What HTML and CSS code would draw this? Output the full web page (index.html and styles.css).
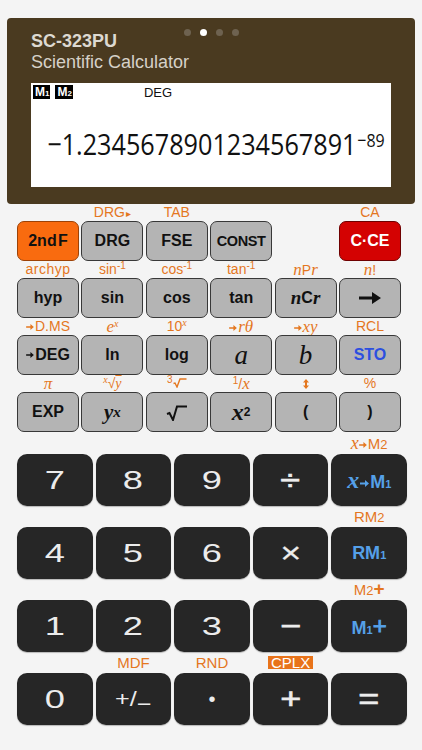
FILE: index.html
```html
<!DOCTYPE html>
<html>
<head>
<meta charset="utf-8">
<link rel="stylesheet" href="styles.css">
</head>
<body>
<div class="panel">
  <div class="head">
    <div class="title">
      <div class="model">SC-323PU</div>
      <div class="sub">Scientific Calculator</div>
    </div>
    <div class="dots"><i></i><i class="on"></i><i></i><i></i></div>
  </div>
  <div class="lcd">
    <div class="lcd-top">
      <span class="mem">M<small>1</small></span><span class="mem">M<small>2</small></span>
      <span class="deg">DEG</span>
    </div>
    <div class="num-line"><span class="num">−1.2345678901234567891<span class="exp">−89</span></span></div>
  </div>
</div>

<div class="fn">
  <!-- row 1 -->
  <div class="cell"><div class="lbl"></div><div class="fk orange">2nd&#8202;F</div></div>
  <div class="cell"><div class="lbl">DRG<span class="tri">▸</span></div><div class="fk">DRG</div></div>
  <div class="cell"><div class="lbl">TAB</div><div class="fk">FSE</div></div>
  <div class="cell"><div class="lbl"></div><div class="fk const">CONST</div></div>
  <div class="cell"></div>
  <div class="cell"><div class="lbl">CA</div><div class="fk red">C·CE</div></div>
  <!-- row 2 -->
  <div class="cell"><div class="lbl arc">archyp</div><div class="fk">hyp</div></div>
  <div class="cell"><div class="lbl">sin<sup>-1</sup></div><div class="fk">sin</div></div>
  <div class="cell"><div class="lbl">cos<sup>-1</sup></div><div class="fk">cos</div></div>
  <div class="cell"><div class="lbl">tan<sup>-1</sup></div><div class="fk">tan</div></div>
  <div class="cell"><div class="lbl"><span class="i big">n</span>P<span class="i big">r</span></div><div class="fk"><span class="i bi">n</span>C<span class="i bi">r</span></div></div>
  <div class="cell"><div class="lbl"><span class="i big">n</span>!</div><div class="fk"><svg class="bigarr" viewBox="0 0 22 12"><path d="M0 4.4h13V0l9 6-9 6V7.6H0z"/></svg></div></div>
  <!-- row 3 -->
  <div class="cell"><div class="lbl"><svg class="sa" viewBox="0 0 9 7"><path d="M0 2.6h5V0l4 3.5L5 7V4.4H0z"/></svg>D.MS</div><div class="fk"><svg class="sa" viewBox="0 0 9 7"><path d="M0 2.6h5V0l4 3.5L5 7V4.4H0z"/></svg>DEG</div></div>
  <div class="cell"><div class="lbl"><span class="i big">e</span><sup class="i">x</sup></div><div class="fk">ln</div></div>
  <div class="cell"><div class="lbl">10<sup class="i">x</sup></div><div class="fk">log</div></div>
  <div class="cell"><div class="lbl"><svg class="sa" viewBox="0 0 9 7"><path d="M0 2.6h5V0l4 3.5L5 7V4.4H0z"/></svg><span class="i big">rθ</span></div><div class="fk"><span class="i ab">a</span></div></div>
  <div class="cell"><div class="lbl"><svg class="sa" viewBox="0 0 9 7"><path d="M0 2.6h5V0l4 3.5L5 7V4.4H0z"/></svg><span class="i big">xy</span></div><div class="fk"><span class="i ab">b</span></div></div>
  <div class="cell"><div class="lbl">RCL</div><div class="fk blue">STO</div></div>
  <!-- row 4 -->
  <div class="cell"><div class="lbl"><span class="i big">π</span></div><div class="fk">EXP</div></div>
  <div class="cell"><div class="lbl"><sup class="i">x</sup>√<span class="i ol">y</span></div><div class="fk"><span class="i bi yx">y</span><sup class="i bi sx">x</sup></div></div>
  <div class="cell"><div class="lbl"><sup>3</sup><svg class="rad-s" viewBox="0 0 14 10"><path d="M0.5 5.5 2 5 4 9 7 1H13.5"/></svg></div><div class="fk"><svg class="rad" viewBox="0 0 22 16"><path d="M1 9 3.5 8 7 15 11 1.5H21"/></svg></div></div>
  <div class="cell"><div class="lbl"><sup>1</sup>/<span class="i big">x</span></div><div class="fk"><span class="i bi x2">x</span><sup class="s2">2</sup></div></div>
  <div class="cell"><div class="lbl"><svg class="ud" viewBox="0 0 6 10"><path d="M3 0 6 3.5H4v3h2L3 10 0 6.5h2v-3H0z"/></svg></div><div class="fk">(</div></div>
  <div class="cell"><div class="lbl">%</div><div class="fk">)</div></div>
</div>

<div class="num-grid">
  <!-- row 1 -->
  <div class="cell"><div class="nl"></div><div class="nk"><span class="g">7</span></div></div>
  <div class="cell"><div class="nl"></div><div class="nk"><span class="g">8</span></div></div>
  <div class="cell"><div class="nl"></div><div class="nk"><span class="g">9</span></div></div>
  <div class="cell"><div class="nl"></div><div class="nk"><span class="op">÷</span></div></div>
  <div class="cell"><div class="nl"><span class="i big">x</span><svg class="sa" viewBox="0 0 9 7"><path d="M0 2.6h5V0l4 3.5L5 7V4.4H0z"/></svg>M<span class="sm">2</span></div><div class="nk"><span class="bl"><span class="i bx">x</span><svg class="sa" viewBox="0 0 9 7"><path d="M0 2.6h5V0l4 3.5L5 7V4.4H0z"/></svg>M<span class="s1">1</span></span></div></div>
  <!-- row 2 -->
  <div class="cell"><div class="nl"></div><div class="nk"><span class="g">4</span></div></div>
  <div class="cell"><div class="nl"></div><div class="nk"><span class="g">5</span></div></div>
  <div class="cell"><div class="nl"></div><div class="nk"><span class="g">6</span></div></div>
  <div class="cell"><div class="nl"></div><div class="nk"><span class="op thin">×</span></div></div>
  <div class="cell"><div class="nl">RM<span class="sm">2</span></div><div class="nk"><span class="bl">RM<span class="s1">1</span></span></div></div>
  <!-- row 3 -->
  <div class="cell"><div class="nl"></div><div class="nk"><span class="g">1</span></div></div>
  <div class="cell"><div class="nl"></div><div class="nk"><span class="g">2</span></div></div>
  <div class="cell"><div class="nl"></div><div class="nk"><span class="g">3</span></div></div>
  <div class="cell"><div class="nl"></div><div class="nk"><span class="op">−</span></div></div>
  <div class="cell"><div class="nl">M<span class="sm">2</span><b class="plus">+</b></div><div class="nk"><span class="bl">M<span class="s1">1</span><span class="bplus">+</span></span></div></div>
  <!-- row 4 -->
  <div class="cell"><div class="nl"></div><div class="nk"><span class="g">0</span></div></div>
  <div class="cell"><div class="nl">MDF</div><div class="nk"><span class="g pm">+/<span class="low">−</span></span></div></div>
  <div class="cell"><div class="nl">RND</div><div class="nk"><span class="dot">•</span></div></div>
  <div class="cell"><div class="nl"><span class="cplx">CPLX</span></div><div class="nk"><span class="op">+</span></div></div>
  <div class="cell"><div class="nl"></div><div class="nk"><span class="op">=</span></div></div>
</div>
</body>
</html>
```

FILE: styles.css
```css
* { box-sizing: border-box; }
html, body { margin: 0; }
body {
  background: #f4f4f4;
  font-family: "Liberation Sans", Arial, sans-serif;
  width: 422px;
  height: 750px;
  overflow: hidden;
}

.i { font-family: "Liberation Serif", "Times New Roman", serif; font-style: italic; }
sup { line-height: 0; font-size: 10px; vertical-align: 5px; }

/* top panel */
.panel {
  margin: 18px 7px 0;
  height: 186px;
  background: #4a3a20;
  border-radius: 4px;
  padding: 13px 24px 0;
}
.head { display: grid; }
.title, .dots { grid-area: 1 / 1; }
.model { font-weight: bold; font-size: 18px; line-height: 21px; color: #ddd9d1; }
.sub { font-size: 18px; line-height: 21px; color: #d6d1c8; }
.dots { justify-self: center; align-self: start; display: flex; gap: 9px; margin-top: -2.5px; }
.dots i { display: block; width: 7px; height: 7px; border-radius: 50%; background: #6e6250; }
.dots i.on { background: #fff; }

.lcd {
  margin-top: 10px;
  height: 104px;
  background: #fff;
  padding: 2px 6px 0 2px;
}
.lcd-top { display: flex; height: 14px; }
.mem {
  background: #000;
  color: #fff;
  font-weight: bold;
  font-size: 12px;
  line-height: 14px;
  padding: 0 1px 0 2px;
  margin-right: 5px;
}
.mem small { font-size: 8px; }
.deg { margin-left: 66px; font-size: 13px; line-height: 16px; color: #111; }
.num-line { display: flex; justify-content: flex-end; margin-top: 25px; height: 40px; }
.num {
  flex: none;
  font-family: "Open Sans", sans-serif;
  font-size: 30px;
  line-height: 40px;
  color: #111;
  transform: scaleX(0.84);
  transform-origin: right center;
  white-space: nowrap;
}
.exp { font-size: 19px; vertical-align: 8px; line-height: 1; margin-left: 1px; }

/* function keys */
.fn {
  display: grid;
  grid-template-columns: repeat(6, 62px);
  column-gap: 2.4px;
  margin-left: 17px;
}
.cell { display: flex; flex-direction: column; }
.lbl {
  height: 17px;
  line-height: 17px;
  text-align: center;
  color: #e4771f;
  font-size: 14px;
  white-space: nowrap;
}
.lbl.arc { letter-spacing: 0.5px; }
.lbl .big { font-size: 17px; }
.tri { font-size: 10px; margin-left: 1px; }
.fk {
  height: 40px;
  border: 1.5px solid #383838;
  border-radius: 7px;
  background: #b4b4b4;
  display: flex;
  align-items: center;
  justify-content: center;
  font-weight: bold;
  font-size: 16px;
  color: #111;
}
.fk.orange { background: #f96b0f; border-color: #9c4207; font-size: 16px; }
.fk.red { background: #d40202; border-color: #6e0000; color: #fff; }
.fk.blue { color: #2c4fe0; }
.fk.const { font-size: 14.5px; letter-spacing: -0.4px; }
.bi { font-weight: bold; font-size: 19px; }
.ab { font-size: 27px; font-weight: normal; }
.yx { font-size: 21px; }
.sx { font-size: 15px; vertical-align: 7px; }
.x2 { font-size: 24px; }
.s2 { font-size: 12px; vertical-align: 6px; font-weight: bold; }
.sa { width: 8px; height: 6px; fill: currentColor; margin-right: 1px; vertical-align: 1px; }
.bigarr { width: 22px; height: 12px; fill: #111; }
.rad { width: 22px; height: 16px; fill: none; stroke: #111; stroke-width: 2; margin-top: 2px; }
.rad-s { width: 14px; height: 10px; fill: none; stroke: currentColor; stroke-width: 1.4; vertical-align: 0; }
.ud { width: 6px; height: 10px; fill: currentColor; vertical-align: -1px; }
.ol { text-decoration: overline; }

/* number keys */
.num-grid {
  display: grid;
  grid-template-columns: repeat(5, 1fr);
  column-gap: 3px;
  margin: 1px 15px 0 17px;
}
.nl {
  height: 21px;
  line-height: 21px;
  text-align: center;
  color: #e4771f;
  font-size: 15px;
  white-space: nowrap;
}
.nl .big { font-size: 18px; }
.sm { font-size: 13px; }
.plus { font-size: 19px; line-height: 0; }
.cplx {
  display: inline-block;
  background: #e8731a;
  color: #fff;
  line-height: 13px;
  padding: 0 3px;
  font-size: 15px;
}
.nk {
  height: 52px;
  border-radius: 10px;
  background: #262626;
  color: #ececec;
  font-size: 25px;
  display: flex;
  align-items: center;
  justify-content: center;
  box-shadow: 0 1px 1px rgba(0, 0, 0, 0.25);
}
.g { display: inline-block; transform: scaleX(1.45); }
.g.pm { font-size: 21px; transform: scaleX(1.2); }
.op {
  display: inline-block;
  font-size: 30px;
  transform: scaleX(1.2);
  -webkit-text-stroke: 0.6px #ececec;
}
.op.thin { -webkit-text-stroke: 0.2px #ececec; }
.low { display: inline-block; transform: translateY(5px); }
.dot { font-size: 20px; }
.bl { color: #55a0e8; font-weight: bold; font-size: 18px; }
.bl .bx { font-size: 24px; }
.bl .sa { width: 9px; height: 7px; margin: 0 1px; }
.s1 { font-size: 11px; }
.bplus { font-size: 24px; font-weight: normal; -webkit-text-stroke: 0.8px #55a0e8; }
```
